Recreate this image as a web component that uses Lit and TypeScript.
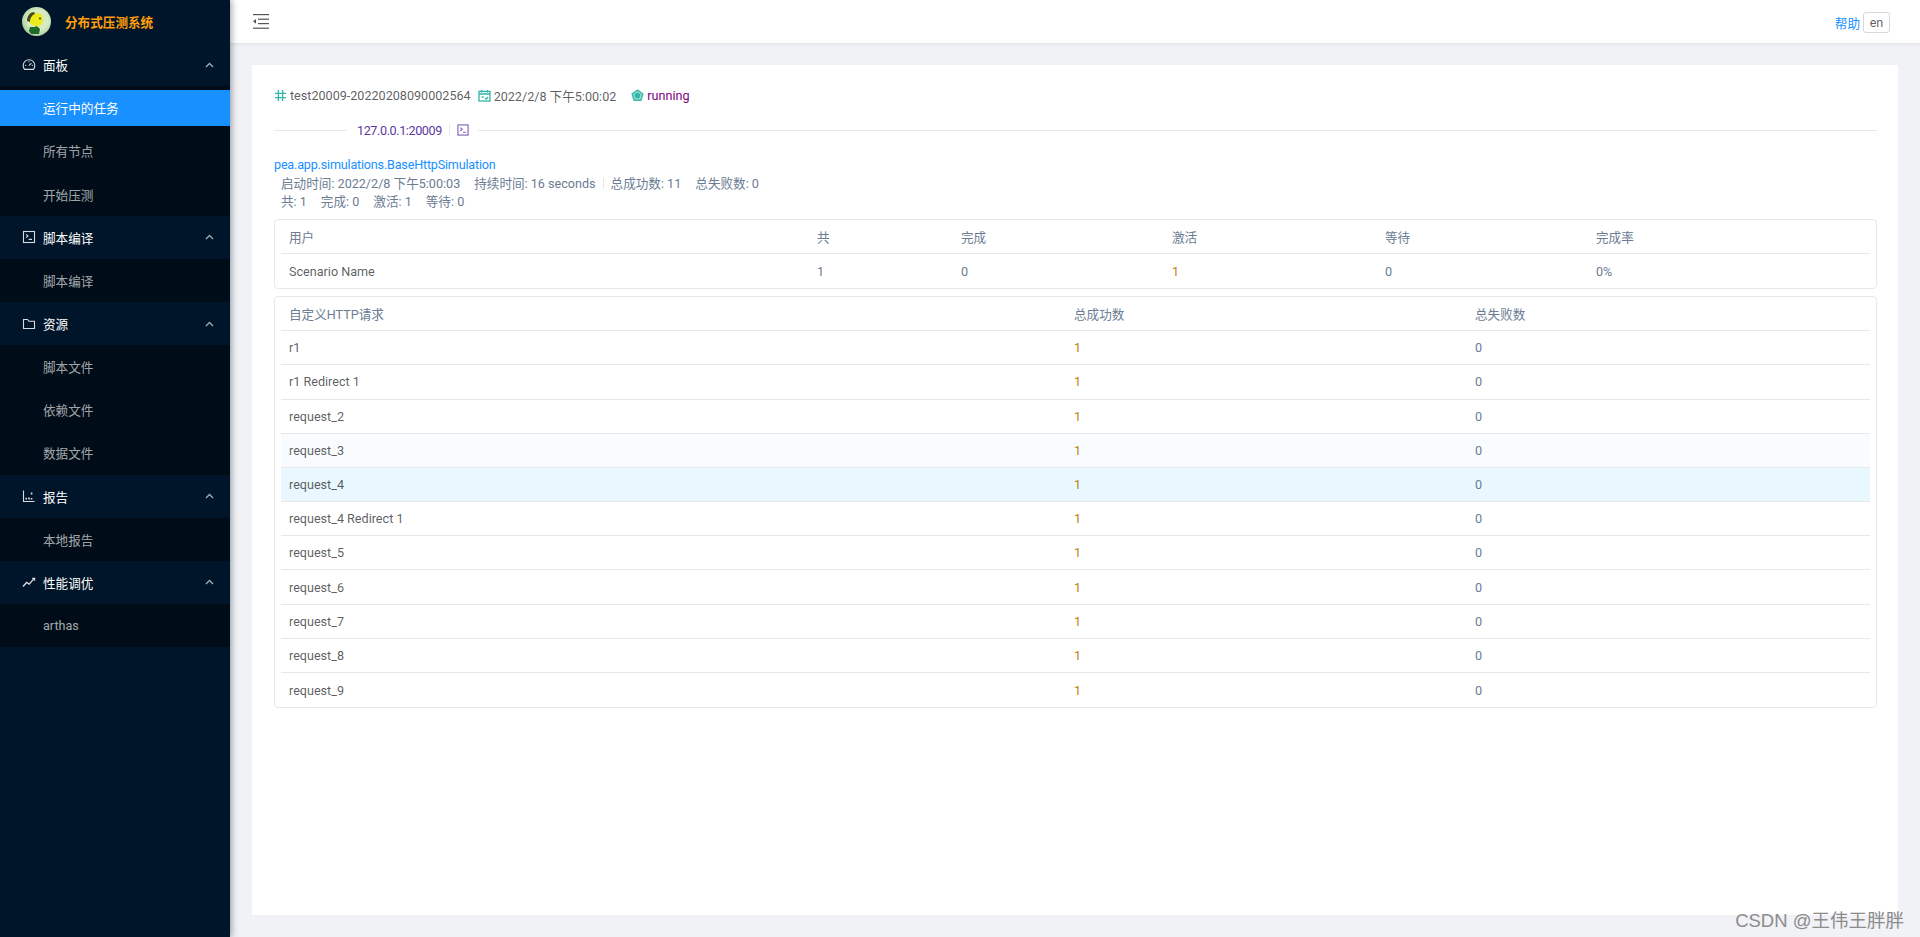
import { LitElement, html, css, svg } from 'lit';
import { customElement } from 'lit/decorators.js';

const menu = [
  { title: '面板', icon: 'dash', items: ['运行中的任务', '所有节点', '开始压测'] },
  { title: '脚本编译', icon: 'code', items: ['脚本编译'] },
  { title: '资源', icon: 'folder', items: ['脚本文件', '依赖文件', '数据文件'] },
  { title: '报告', icon: 'chart', items: ['本地报告'] },
  { title: '性能调优', icon: 'line', items: ['arthas'] },
];

const requests = ['r1', 'r1 Redirect 1', 'request_2', 'request_3', 'request_4', 'request_4 Redirect 1',
  'request_5', 'request_6', 'request_7', 'request_8', 'request_9'];

const icons: Record<string, unknown> = {
  dash: svg`<path d="M2.6 11.4A5.8 5.8 0 1 1 11.4 11.4z"/><path d="M7 7.6l2.4-2.4M3.2 7.4h1M9.8 7.4h1M7 3.2v1"/>`,
  code: svg`<rect x="1.5" y="1.5" width="11" height="11"/><path d="M4 4.4l2 1.6-2 1.6M6.6 9.4h3.4"/>`,
  folder: svg`<path d="M1.5 11.5v-9h4l1.4 1.8h5.6v7.2z"/>`,
  chart: svg`<path d="M1.5 1.5v11h11"/><path d="M4.2 10.4V8.8M7 10.4V8.6M9.6 10.4V9M9.6 5.4V3.6" stroke-width="1.6"/>`,
  line: svg`<path d="M1 11.5l3.6-4 2.6 1.6 4.4-5" stroke-width="1.4"/><path d="M10.2 3.4h2.4v2.4" stroke-width="1.2"/>`,
};

@customElement('app-root')
export class AppRoot extends LitElement {
  static styles = css`
    :host {
      display: block;
      height: 937px;
      overflow: hidden;
      position: relative;
      background: #f0f2f5;
      font-family: Roboto, 'Noto Sans CJK SC', sans-serif;
      font-size: 12.6px;
      color: rgba(0, 0, 0, 0.65);
    }
    .layout { display: flex; height: 937px; }

    /* sidebar */
    .sider {
      width: 230px;
      flex: none;
      background: #001529;
      box-shadow: 2px 0 6px rgba(0, 21, 41, 0.35);
      position: relative;
      z-index: 2;
    }
    .logo { display: flex; align-items: center; height: 43px; padding-left: 22px; gap: 14px; }
    .avatar {
      width: 29px;
      height: 29px;
      border-radius: 50%;
      background: radial-gradient(circle at 55% 45%, #d6ecc0 0 45%, #a9c99a 75%, #6f9a70 100%);
      overflow: hidden;
    }
    .avatar svg { display: block; }
    .brand { color: #ff9f0a; font-weight: 700; font-size: 12.6px; }
    .group {
      display: flex;
      align-items: center;
      height: 43.15px;
      padding-left: 22px;
      padding-right: 16px;
      color: #fff;
    }
    .group .label { flex: 1; margin-left: 7px; }
    .group-icon { width: 14px; height: 14px; fill: none; stroke: #d6dbe0; stroke-width: 1.1; }
    .chev { width: 9px; height: 6px; fill: none; stroke: rgba(255, 255, 255, 0.65); stroke-width: 1.3; }
    .sub { background: #000c17; padding: 3.6px 0; }
    .sub a {
      display: flex;
      align-items: center;
      height: 36px;
      padding-left: 43px;
      margin-bottom: 7.15px;
      color: rgba(255, 255, 255, 0.65);
    }
    .sub a:last-child { margin-bottom: 0; }
    .sub a.active { background: #1890ff; color: #fff; }

    /* main column */
    .main { flex: 1; min-width: 0; display: flex; flex-direction: column; }
    .topbar {
      height: 43px;
      flex: none;
      background: #fff;
      box-shadow: 0 1px 4px rgba(0, 21, 41, 0.08);
      display: flex;
      align-items: center;
      padding: 0 30px 0 23px;
    }
    .fold { width: 16px; height: 15px; fill: #555; }
    .spacer { flex: 1; }
    .help { color: #1890ff; margin: 2px 3px 0 0; }
    .lang {
      border: 1px solid #d9d9d9;
      border-radius: 3px;
      width: 27px;
      height: 21px;
      margin-top: 2px;
      line-height: 19px;
      text-align: center;
      box-sizing: border-box;
    }
    .content { flex: 1; margin: 22px 22px 22px 22px; background: #fff; padding: 21px 21px 22px 22px; box-sizing: border-box; }

    .meta { display: flex; align-items: center; height: 19px; }
    .meta svg { width: 13px; height: 13px; fill: none; stroke: #36b5a9; stroke-width: 1.3; margin-right: 3px; flex: none; }
    .meta .m { display: inline-flex; align-items: center; margin-right: 7px; }
    .meta .status { color: #800080; margin-left: 8px; }

    .divider { display: flex; align-items: center; height: 18px; margin-top: 16px; }
    .divider .rule { height: 1px; background: #e8e8e8; }
    .divider .r1 { width: 73px; }
    .divider .r2 { flex: 1; }
    .divider .ip { color: #5b3a9e; margin: 0 6px 0 10px; letter-spacing: -0.4px; }
    .divider .bar { width: 1px; height: 12px; background: #e8e8e8; margin: 0 7px 0 1px; }
    .divider svg { width: 12px; height: 12px; fill: none; stroke: #7b5fb5; stroke-width: 1.2; margin-right: 9px; }

    .sim { color: #1890ff; margin-top: 17px; line-height: 18px; letter-spacing: -0.19px; }
    .stats { color: #6b7c93; padding-left: 7px; line-height: 18px; position: relative; top: 1px; }
    .stats span { margin-right: 14px; }
    .stats .sep { display: inline-block; width: 1px; height: 11px; background: #e8e8e8; margin: 0 7px 0 -7px; vertical-align: -1px; }

    .card {
      border: 1px solid #e8e8e8;
      border-radius: 4px;
      padding: 0 6px;
      margin-top: 9px;
    }
    .card.t2 { margin-top: 7px; }
    .row {
      display: grid;
      height: 34.2px;
      align-items: center;
      border-bottom: 1px solid #e8e8e8;
      box-sizing: border-box;
      padding-left: 8px;
    }
    .row:last-child { border-bottom: none; }
    .head { color: #6b7c93; }
    .t2 .row.head { height: 33.8px; }
    .t1 .row { grid-template-columns: 528px 144px 211px 213px 211px 1fr; }
    .t2 .row { grid-template-columns: 785px 401px 1fr; }
    .num { color: #b8860b; }
    .row.soft { background: #f8fcff; }
    .row.hl { background: #e9f7fe; }
    .dim { color: #6b7c93; }

    .watermark {
      position: absolute;
      right: 16px;
      bottom: 5px;
      z-index: 3;
      color: #8c8c8c;
      font-size: 18.5px;
      font-family: 'Liberation Sans', 'Noto Sans CJK SC', sans-serif;
    }
  `;

  private renderSider() {
    return html`
      <aside class="sider">
        <div class="logo">
          <div class="avatar">
            <svg width="29" height="29" viewBox="0 0 29 29">
              <path d="M10 8c4-4 11-2 11 4s-4 8-8 7-6-3-5-6 1-4 2-5z" fill="#ecec1c" />
              <path d="M5 14c0-5 3-9 7-9l1 2c-3 1-5 4-5 8z" fill="#4a4a20" />
              <path d="M8 20h5l1-1 2 1 2 2-1 5H9l-2-3z" fill="#1f6b2a" />
              <circle cx="18" cy="11.5" r="1" fill="#3a3a10" />
            </svg>
          </div>
          <span class="brand">分布式压测系统</span>
        </div>
        ${menu.map((g, gi) => html`
          <div class="group">
            <svg class="group-icon" viewBox="0 0 14 14">${icons[g.icon]}</svg>
            <span class="label">${g.title}</span>
            <svg class="chev" viewBox="0 0 9 6"><path d="M1 5l3.5-3.5L8 5" /></svg>
          </div>
          <div class="sub">
            ${g.items.map((it, i) => html`<a class=${gi === 0 && i === 0 ? 'active' : ''}>${it}</a>`)}
          </div>
        `)}
      </aside>
    `;
  }

  render() {
    return html`
      <div class="layout">
        ${this.renderSider()}
        <div class="main">
          <header class="topbar">
            <svg class="fold" viewBox="0 0 16 15">
              <rect x="0" y="0" width="16" height="1.2" />
              <rect x="5" y="4.6" width="11" height="1.2" />
              <rect x="5" y="9" width="11" height="1.2" />
              <rect x="0" y="13.6" width="16" height="1.2" />
              <path d="M0 7.3l3-2.4v4.8z" />
            </svg>
            <div class="spacer"></div>
            <span class="help">帮助</span>
            <span class="lang">en</span>
          </header>
          <div class="content">
            <div class="meta">
              <span class="m">
                <svg viewBox="0 0 13 13"><path d="M4.4 1v11M8.6 1v11M1 4.4h11M1 8.6h11" /></svg>test20009-20220208090002564
              </span>
              <span class="m">
                <svg viewBox="0 0 13 13"><rect x="1" y="2.4" width="11" height="9.6" /><path d="M1 5h11M3.6 1v2.4M9.4 1v2.4M3.6 8h2M7 9l1.2 1 2-2" /></svg>2022/2/8 下午5:00:02
              </span>
              <span class="m status">
                <svg viewBox="0 0 13 13"><path d="M6.5 1l5.4 4-2 6.4H3.1l-2-6.4z" fill="#8fdcd0" /><path d="M6.5 3.4l3 2.2-1.1 3.6H4.6L3.5 5.6z" fill="#36b5a9" stroke="none" /></svg>running
              </span>
            </div>
            <div class="divider">
              <div class="rule r1"></div>
              <span class="ip">127.0.0.1:20009</span>
              <span class="bar"></span>
              <svg viewBox="0 0 13 13"><rect x="1" y="1" width="11" height="11" /><path d="M3.6 4l2 1.8-2 1.8M6.6 9h3" /></svg>
              <div class="rule r2"></div>
            </div>
            <div class="sim">pea.app.simulations.BaseHttpSimulation</div>
            <div class="stats">
              <span>启动时间: 2022/2/8 下午5:00:03</span><span>持续时间: 16 seconds</span><span class="sep"></span><span>总成功数: 11</span><span>总失败数: 0</span>
            </div>
            <div class="stats"><span>共: 1</span><span>完成: 0</span><span>激活: 1</span><span>等待: 0</span></div>

            <div class="card t1">
              <div class="row head"><span>用户</span><span>共</span><span>完成</span><span>激活</span><span>等待</span><span>完成率</span></div>
              <div class="row"><span>Scenario Name</span><span class="dim">1</span><span class="dim">0</span><span class="num">1</span><span class="dim">0</span><span class="dim">0%</span></div>
            </div>
            <div class="card t2">
              <div class="row head"><span>自定义HTTP请求</span><span>总成功数</span><span>总失败数</span></div>
              ${requests.map((r, i) => html`
                <div class="row ${i === 3 ? 'soft' : i === 4 ? 'hl' : ''}"><span>${r}</span><span class="num">1</span><span class="dim">0</span></div>
              `)}
            </div>
          </div>
        </div>
      </div>
      <div class="watermark">CSDN @王伟王胖胖</div>
    `;
  }
}
